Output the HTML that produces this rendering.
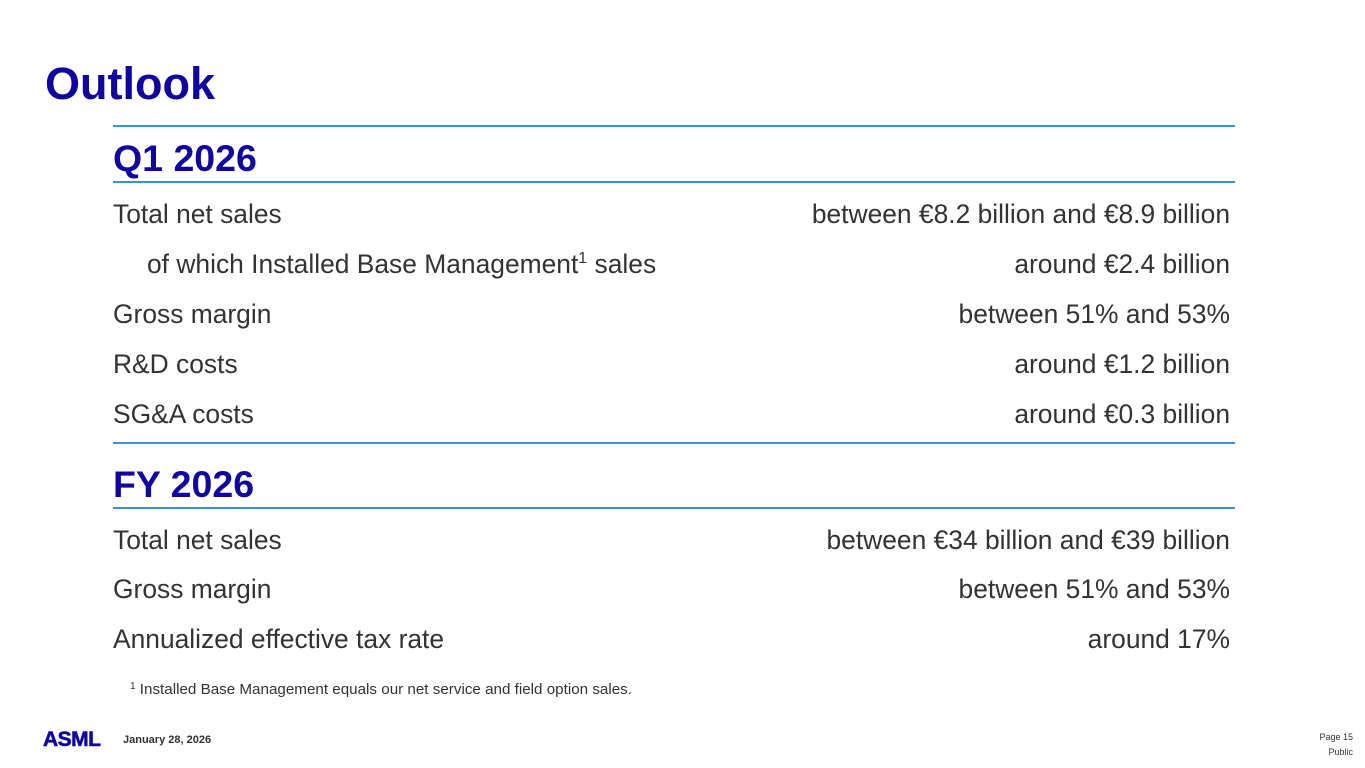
<!DOCTYPE html>
<html><head><meta charset="utf-8"><style>
body{margin:0;width:1365px;height:768px;background:#fff;position:relative;overflow:hidden;font-family:"Liberation Sans",Arial,Helvetica,sans-serif;}
div{position:absolute;line-height:1;white-space:nowrap}
.t{font-size:26.4px;color:#333;}
.l{left:113px}
.r{right:135px;text-align:right}
.h{font-weight:bold;color:#10069f}
.ln{left:113px;width:1122px;height:2px;background:#3f8edb}
sup{font-size:16px;vertical-align:10px;line-height:0}
</style></head><body>
<div class="h" style="left:45px;top:61px;font-size:45px">Outlook</div>
<div class="ln" style="top:125px"></div>
<div class="h" style="left:113px;top:140px;font-size:37.5px">Q1 2026</div>
<div class="ln" style="top:181px"></div>
<div class="t l" style="top:201px">Total net sales</div><div class="t r" style="top:201px">between €8.2 billion and €8.9 billion</div>
<div class="t" style="left:147px;top:251px">of which Installed Base Management<sup>1</sup> sales</div><div class="t r" style="top:251px">around €2.4 billion</div>
<div class="t l" style="top:301px">Gross margin</div><div class="t r" style="top:301px">between 51% and 53%</div>
<div class="t l" style="top:351px">R&amp;D costs</div><div class="t r" style="top:351px">around €1.2 billion</div>
<div class="t l" style="top:401px">SG&amp;A costs</div><div class="t r" style="top:401px">around €0.3 billion</div>
<div class="ln" style="top:442px"></div>
<div class="h" style="left:113px;top:466px;font-size:37.5px">FY 2026</div>
<div class="ln" style="top:507px"></div>
<div class="t l" style="top:527px">Total net sales</div><div class="t r" style="top:527px">between €34 billion and €39 billion</div>
<div class="t l" style="top:576px">Gross margin</div><div class="t r" style="top:576px">between 51% and 53%</div>
<div class="t l" style="top:626px">Annualized effective tax rate</div><div class="t r" style="top:626px">around 17%</div>
<div style="left:130px;top:682px;font-size:15.2px;color:#333"><span style="font-size:10px;vertical-align:5px">1</span> Installed Base Management equals our net service and field option sales.</div>
<div style="left:43px;top:729px;font-size:21px;font-weight:900;color:#10069f;letter-spacing:-0.5px;-webkit-text-stroke:0.6px #10069f">ASML</div>
<div style="left:123px;top:735px;font-size:11px;font-weight:bold;color:#333">January 28, 2026</div>
<div style="right:12px;top:733px;font-size:9px;color:#333">Page 15</div>
<div style="right:12px;top:748px;font-size:9px;color:#333">Public</div>
</body></html>
